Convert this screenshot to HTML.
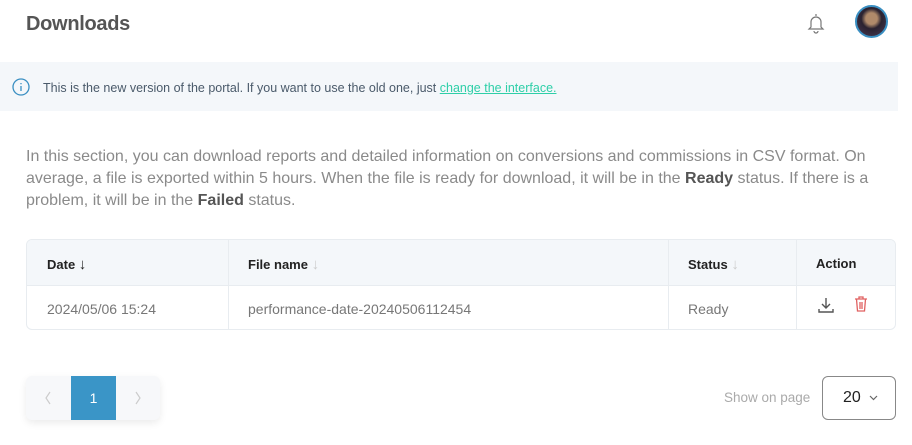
<!DOCTYPE html><html><head><style>
body{margin:0;width:912px;height:445px;background:#fff;font-family:"Liberation Sans",sans-serif;position:relative;overflow:hidden}
.a{position:absolute}
</style></head><body>
<div class="a" style="left:26px;top:13px;font-size:20px;color:#555;font-weight:bold;letter-spacing:-0.3px">Downloads</div>
<svg class="a" style="left:806px;top:12px" width="20" height="22" viewBox="0 0 20 22" fill="none" stroke="#777" stroke-width="1.2"><path d="M10 2v2M5 15V10a5 5 0 0 1 10 0v5l2 2H3z M8 19a2 2 0 0 0 4 0"/></svg>
<div class="a" style="left:855px;top:5px;width:33px;height:33px;border-radius:50%;background:radial-gradient(circle at 50% 40%,#b08a6a 0 25%,#2a2230 45%,#4a3a55);border:2px solid #3a8fc2;box-sizing:border-box"></div>
<div class="a" style="left:0;top:62px;width:898px;height:49px;background:#f4f7fa"></div>
<svg class="a" style="left:12px;top:78px" width="18" height="18" viewBox="0 0 18 18" fill="none" stroke="#3a8fc2" stroke-width="1.3"><circle cx="9" cy="9" r="8"/><path d="M9 8v5M9 5v1.2"/></svg>
<div class="a" style="left:43px;top:81px;font-size:12.5px;color:#4a5a6a">This is the new version of the portal. If you want to use the old one, just <span style="color:#2ecfa8;text-decoration:underline">change the interface.</span></div>
<div class="a" style="left:26px;top:146px;width:870px;font-size:16px;line-height:22px;color:#8a8a8a">In this section, you can download reports and detailed information on conversions and commissions in CSV format. On average, a file is exported within 5 hours. When the file is ready for download, it will be in the <b style="color:#555">Ready</b> status. If there is a problem, it will be in the <b style="color:#555">Failed</b> status.</div>
<div class="a" style="left:26px;top:239px;width:868px;height:89px;border:1px solid #e8ecf0;border-radius:6px;overflow:hidden">
<div class="a" style="left:0;top:0;width:868px;height:45px;background:#f4f7fa;border-bottom:1px solid #e8ecf0"></div>
<div class="a" style="left:201px;top:0;width:1px;height:89px;background:#e8ecf0"></div>
<div class="a" style="left:641px;top:0;width:1px;height:89px;background:#e8ecf0"></div>
<div class="a" style="left:769px;top:0;width:1px;height:89px;background:#e8ecf0"></div>
<div class="a" style="left:20px;top:16px;font-size:13px;font-weight:bold;color:#222">Date <span style="font-weight:normal;font-size:15px">↓</span></div>
<div class="a" style="left:221px;top:16px;font-size:13px;font-weight:bold;color:#222">File name <span style="font-weight:normal;color:#ccc;font-size:15px">↓</span></div>
<div class="a" style="left:661px;top:16px;font-size:13px;font-weight:bold;color:#222">Status <span style="font-weight:normal;color:#ccc;font-size:15px">↓</span></div>
<div class="a" style="left:789px;top:16px;font-size:13px;font-weight:bold;color:#222">Action</div>
<div class="a" style="left:20px;top:61px;font-size:14px;color:#777">2024/05/06 15:24</div>
<div class="a" style="left:221px;top:61px;font-size:14px;color:#777">performance-date-20240506112454</div>
<div class="a" style="left:661px;top:61px;font-size:14px;color:#777">Ready</div>
<svg class="a" style="left:790px;top:56px" width="18" height="18" viewBox="0 0 18 18" fill="none" stroke="#555" stroke-width="1.4"><path d="M9 2v10M5 8l4 4 4-4M2 13v3h14v-3"/></svg>
<svg class="a" style="left:826px;top:55px" width="16" height="18" viewBox="0 0 16 18" fill="none" stroke="#e06060" stroke-width="1.3"><path d="M2 4h12M6 4V2h4v2M3.5 4l1 12h7l1-12M7 7v7M9 7v7"/></svg>
</div>
<div class="a" style="left:26px;top:376px;width:134px;height:44px;background:#f7f8fa;border-radius:6px;box-shadow:0 3px 8px rgba(0,0,0,.08)"></div>
<svg class="a" style="left:43px;top:390px" width="10" height="16" viewBox="0 0 10 16" fill="none" stroke="#ccc" stroke-width="1.2"><path d="M7 2L3 8l4 6"/></svg>
<div class="a" style="left:71px;top:376px;width:45px;height:44px;background:#3a95c7;color:#fff;font-size:14px;text-align:center;line-height:44px">1</div>
<svg class="a" style="left:133px;top:390px" width="10" height="16" viewBox="0 0 10 16" fill="none" stroke="#ccc" stroke-width="1.2"><path d="M3 2l4 6-4 6"/></svg>
<div class="a" style="left:724px;top:390px;font-size:13.5px;color:#aaa">Show on page</div>
<div class="a" style="left:822px;top:376px;width:72px;height:42px;border:1px solid #888;border-radius:6px;font-size:16px;color:#222;line-height:42px"><span style="position:absolute;left:20px">20</span><svg style="position:absolute;left:46px;top:18px" width="9" height="6" viewBox="0 0 9 6" fill="none" stroke="#666" stroke-width="1.2"><path d="M1 1l3.5 3.5L8 1"/></svg></div>
</body></html>
